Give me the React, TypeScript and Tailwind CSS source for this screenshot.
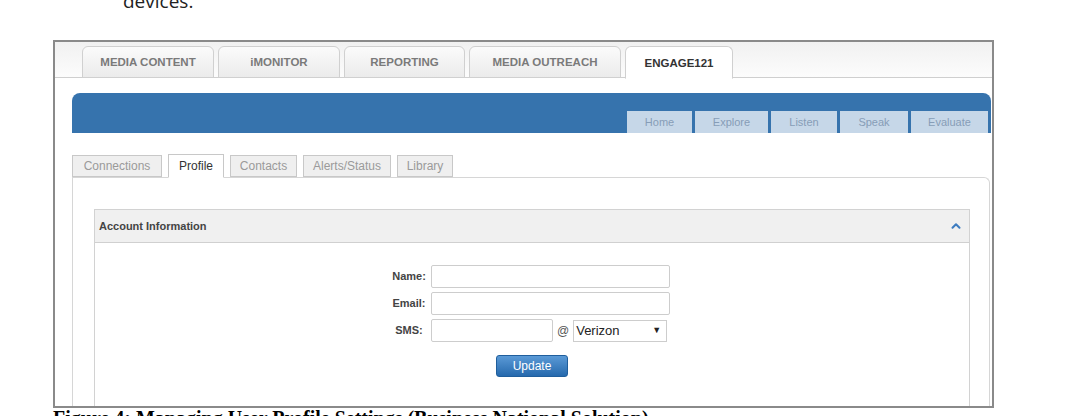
import { ChevronUp } from 'lucide-react';

const topTabs = [
  { label: 'MEDIA CONTENT', w: 'w-[132px]' },
  { label: 'iMONITOR', w: 'w-[122px]' },
  { label: 'REPORTING', w: 'w-[121px]' },
  { label: 'MEDIA OUTREACH', w: 'w-[152px]' },
  { label: 'ENGAGE121', w: 'w-[108px]', active: true },
];

const navItems = [
  { label: 'Home', w: 'w-[65px]' },
  { label: 'Explore', w: 'w-[73px]' },
  { label: 'Listen', w: 'w-[66px]' },
  { label: 'Speak', w: 'w-[68px]' },
  { label: 'Evaluate', w: 'w-[77px]' },
];

const subTabs = [
  { label: 'Connections', w: 'w-[90px]' },
  { label: 'Profile', w: 'w-[56px]', active: true },
  { label: 'Contacts', w: 'w-[67px]' },
  { label: 'Alerts/Status', w: 'w-[88px]' },
  { label: 'Library', w: 'w-[56px]' },
];

function Field({ label, children }: { label: string; children: React.ReactNode }) {
  return (
    <div className="flex items-center h-[23px]">
      <span className="w-[44px] text-center text-[11px] font-bold text-[#444]">{label}</span>
      {children}
    </div>
  );
}

export default function App() {
  return (
    <div className="w-[1072px] h-[416px] overflow-hidden bg-white font-['Liberation_Sans',Arial,sans-serif]">
      <div className="h-[40px] flex items-start">
        <p className="ml-[123px] -mt-[9px] text-[19px] leading-[20px] text-[#222] font-['Open_Sans',sans-serif]">
          devices.
        </p>
      </div>

      <div className="ml-[53px] w-[941px] h-[368px] border-2 border-[#8a8a8a] overflow-hidden">
        {/* top product tabs */}
        <div className="h-[36px] pt-[4px] pl-[27px] flex gap-[4px] border-b border-[#cfcfcf] bg-linear-to-b from-[#f1f1f1] to-[#fcfcfc]">
          {topTabs.map((t) => (
            <div
              key={t.label}
              className={`${t.w} h-[32px] pt-[2px] rounded-t-[6px] border border-[#d0d0d0] flex items-center justify-center text-[11.5px] font-bold ${
                t.active
                  ? 'bg-white text-[#333] border-b-white h-[33px]'
                  : 'bg-linear-to-b from-[#fbfbfb] to-[#ebebeb] text-[#7a7a7a]'
              }`}
            >
              {t.label}
            </div>
          ))}
        </div>

        {/* blue header */}
        <div className="mt-[15px] ml-[17px] mr-[1px] h-[40px] rounded-t-[8px] bg-[#3673ad] flex justify-end items-end pr-[3px] gap-[3px]">
          {navItems.map((n) => (
            <div
              key={n.label}
              className={`${n.w} h-[22px] bg-[#c6d7e8] flex items-center justify-center text-[11px] text-[#869db7]`}
            >
              {n.label}
            </div>
          ))}
        </div>

        {/* sub tabs */}
        <div className="mt-[21px] ml-[17px] flex items-end gap-[6px] h-[23px]">
          {subTabs.map((t) => (
            <div
              key={t.label}
              className={`${t.w} border border-[#c8c8c8] flex items-center justify-center text-[12px] ${
                t.active
                  ? 'h-[24px] bg-white text-[#333] border-b-white relative z-10 -mb-px'
                  : 'h-[22px] bg-[#efefef] text-[#9a9a9a]'
              }`}
            >
              {t.label}
            </div>
          ))}
        </div>

        {/* content panel */}
        <div className="ml-[17px] mr-[2px] h-[240px] border border-b-0 border-[#d6d6d6] rounded-tr-[6px] pt-[31px] pl-[21px] pr-[19px]">
          <div className="border border-[#d2d2d2] h-[220px]">
            <div className="h-[33px] bg-[#f0f0f0] border-b border-[#d0d0d0] flex items-center justify-between pl-[4px] pr-[6px]">
              <span className="text-[11px] font-bold text-[#444]">Account Information</span>
              <ChevronUp className="w-[14px] h-[14px] text-[#3d7cc0]" strokeWidth={3.5} />
            </div>

            <div className="pt-[22px]">
              <div className="ml-[292px] flex flex-col gap-[4px]">
                <Field label="Name:">
                  <div className="w-[239px] h-[23px] border border-[#cdcdcd] rounded-[2px] bg-white" />
                </Field>
                <Field label="Email:">
                  <div className="w-[239px] h-[23px] border border-[#cdcdcd] rounded-[2px] bg-white" />
                </Field>
                <Field label="SMS:">
                  <div className="w-[122px] h-[23px] border border-[#cdcdcd] rounded-[2px] bg-white" />
                  <span className="ml-[4px] text-[12px] text-[#555]">@</span>
                  <div className="ml-[4px] w-[94px] h-[22px] border border-[#cdcdcd] bg-white flex items-center justify-between pl-[2px] pr-[5px]">
                    <span className="text-[13px] text-[#222]">Verizon</span>
                    <span className="text-[9px] text-[#222]">▼</span>
                  </div>
                </Field>
              </div>

              <div className="mt-[13px] flex justify-center">
                <div className="w-[72px] h-[22px] rounded-[3px] border border-[#1f5e9c] bg-linear-to-b from-[#5a9ad6] to-[#2569ad] flex items-center justify-center text-[12px] text-white">
                  Update
                </div>
              </div>
            </div>
          </div>
        </div>
      </div>

      <p className="ml-[53px] text-[20px] leading-[20px] font-bold text-black font-['Liberation_Serif','Times_New_Roman',serif] whitespace-nowrap">
        Figure 4: Managing User Profile Settings (Business National Solution)
      </p>
    </div>
  );
}
